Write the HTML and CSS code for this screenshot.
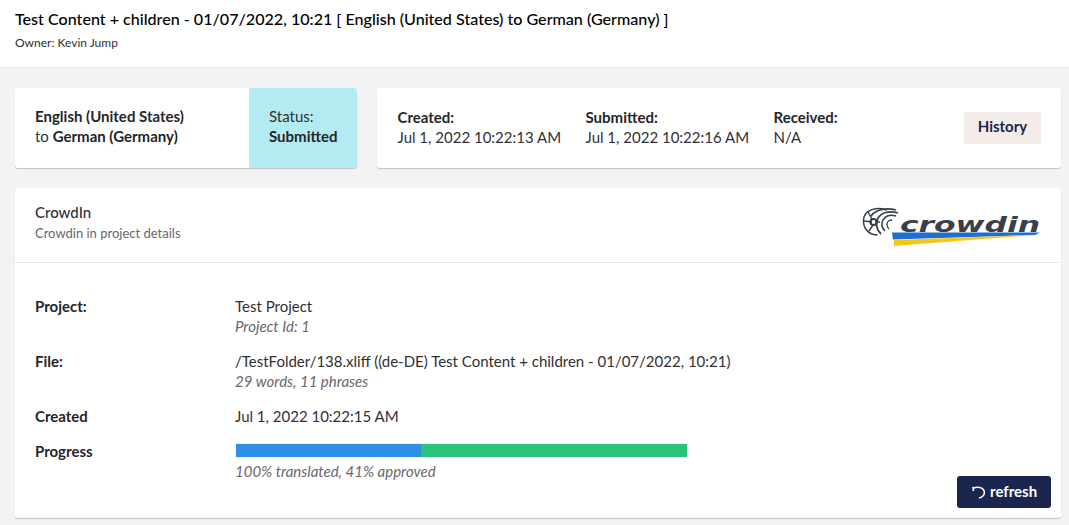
FILE: index.html
```html
<!DOCTYPE html>
<html>
<head>
	<title>Translation job</title>
	<link rel="stylesheet" href="styles.css">
</head>
<body>
	<div class="page-header">
		<div class="page-title">Test Content + children - 01/07/2022, 10:21 [ English (United States) to German (Germany) ]</div>
		<div class="page-owner">Owner: Kevin Jump</div>
	</div>
	<div class="page-body">
		<div class="summary">
			<div class="card lang-card">
				<div class="lang-text">
					<div><b>English (United States)</b></div>
					<div>to <b>German (Germany)</b></div>
				</div>
				<div class="status-box">
					<div>Status:</div>
					<div><b>Submitted</b></div>
				</div>
			</div>
			<div class="card dates-card">
				<div class="date-col">
					<div><b>Created:</b></div>
					<div>Jul 1, 2022 10:22:13 AM</div>
				</div>
				<div class="date-col">
					<div><b>Submitted:</b></div>
					<div>Jul 1, 2022 10:22:16 AM</div>
				</div>
				<div class="date-col">
					<div><b>Received:</b></div>
					<div>N/A</div>
				</div>
				<button class="history-btn">History</button>
			</div>
		</div>
		<div class="card details">
			<div class="details-head">
				<div>
					<div class="provider-name">CrowdIn</div>
					<div class="provider-desc">Crowdin in project details</div>
				</div>
				<svg class="logo" width="180" height="42" viewBox="0 0 180 42">
					<g fill="none" stroke="#3a3f4a">
						<path d="M25 6C12 2 2 7 1.500 16c-.5 9 6 15 14 15" stroke-width="1.500"/>
						<path d="M34 6C24 3 13 6 9 12" stroke-width="1.800"/>
						<path d="M36 9C27 6 19 9 16 14c-3 6 -1 12 3 16" stroke-width="1.800"/>
						<path d="M34 12C28 10 23 12 21 16c-2 4 -1 8 2 11" stroke-width="1.600"/>
						<path d="M30 16c-3 0 -5 2 -5 4s1 4 2 5" stroke-width="1.300"/>
						<path d="M2 17l8 1M6 8l4 7M7 27l4-6M14 18h4" stroke-width="1.500"/>
						<circle cx="11.500" cy="18" r="3" stroke-width="2.200"/>
					</g>
					<text class="logo-word" x="38" y="27.500" textLength="140" lengthAdjust="spacingAndGlyphs">crowdin</text>
					<polygon points="30,28.500 178,28.500 173,31 31,35.500" fill="#1f6fd0"/>
					<polygon points="32,36 172,31 32,42" fill="#f5c518"/>
				</svg>
			</div>
			<div class="details-body">
				<div class="row">
					<div class="row-label"><b>Project:</b></div>
					<div>
						<div>Test Project</div>
						<div class="sub">Project Id: 1</div>
					</div>
				</div>
				<div class="row">
					<div class="row-label"><b>File:</b></div>
					<div>
						<div>/TestFolder/138.xliff ((de-DE) Test Content + children - 01/07/2022, 10:21)</div>
						<div class="sub">29 words, 11 phrases</div>
					</div>
				</div>
				<div class="row">
					<div class="row-label"><b>Created</b></div>
					<div>Jul 1, 2022 10:22:15 AM</div>
				</div>
				<div class="row">
					<div class="row-label"><b>Progress</b></div>
					<div>
						<div class="progress">
							<div class="bar-blue"></div>
							<div class="bar-green"></div>
						</div>
						<div class="sub">100% translated, 41% approved</div>
					</div>
				</div>
			</div>
			<button class="refresh-btn">
				<svg width="16" height="16" viewBox="0 0 16 16" fill="none" stroke="#fff" stroke-width="1.600">
					<path d="M2.200 5.500C5 3.800 13 3 13.400 9.500 13.500 12 11 14.500 8 15"/>
					<path d="M1.900 3.800l.5 4.200"/>
				</svg>
				refresh
			</button>
		</div>
	</div>
</body>
</html>
```

FILE: styles.css
```css
* {
	box-sizing: border-box;
}
body {
	margin: 0;
	height: 525px;
	overflow: hidden;
	background: #f4f2f2;
	font-family: Lato, sans-serif;
	font-size: 15px;
	line-height: 20px;
	color: #303033;
}
b {
	font-weight: 700;
	color: #25252b;
}
.page-header {
	height: 68px;
	padding: 9px 15px 0;
	background: #fff;
	border-bottom: 1px solid #e9e9eb;
}
.page-title {
	font-size: 16.100px;
	font-weight: 500;
	line-height: 20px;
	color: #000;
}
.page-owner {
	margin-top: 4px;
	font-size: 12px;
	line-height: 20px;
}
.page-body {
	padding: 20px 8px 0 15px;
}
.card {
	background: #fff;
	border-radius: 3px;
	box-shadow: 0 1px 1px rgba(0, 0, 0, 0.2);
}
.summary {
	display: flex;
	gap: 20px;
	height: 80px;
	margin-bottom: 20px;
}
.lang-card {
	display: flex;
	width: 342px;
	overflow: hidden;
}
.lang-text {
	flex: 1;
	padding: 18px 20px;
}
.status-box {
	width: 108px;
	padding: 18px 20px;
	background: #b2ebf2;
}
.dates-card {
	flex: 1;
	display: flex;
	align-items: center;
	padding: 0 20px 2px 20.500px;
}
.date-col {
	width: 188px;
}
.history-btn {
	margin-left: auto;
	width: 77px;
	height: 32px;
	margin-top: 2px;
	padding: 0 0 5px;
	border: 0;
	border-radius: 3px;
	background: #f3ece8;
	font: 700 15px Lato, sans-serif;
	color: #1b264f;
}
.details {
	position: relative;
	height: 330px;
}
.details-head {
	display: flex;
	justify-content: space-between;
	align-items: center;
	height: 75px;
	padding: 0 20px;
	border-bottom: 1px solid #e9e9eb;
}
.provider-name {
	margin-top: -6px;
	font-weight: 500;
	line-height: 20px;
}
.provider-desc {
	margin-top: 1px;
	font-size: 13px;
	line-height: 20px;
	color: #68676b;
}
.logo {
	margin-right: -1px;
}
.logo-word {
	font-family: "DejaVu Sans", sans-serif;
	font-size: 22px;
	font-weight: 700;
	font-style: italic;
	fill: #3a3f4a;
}
.details-body {
	padding: 33px 20px 0;
}
.row {
	display: flex;
	margin-bottom: 15px;
}
.row-label {
	width: 200px;
	flex-shrink: 0;
}
.sub {
	font-size: 15px;
	font-style: italic;
	color: #68676b;
}
.progress {
	display: flex;
	width: 453px;
	height: 15px;
	margin: 2px 0 3px;
	border: 1px solid #f3f3f5;
}
.bar-blue {
	width: 41%;
	background: #2f8ee8;
}
.bar-green {
	flex: 1;
	background: #2bc37c;
}
.refresh-btn {
	position: absolute;
	right: 10px;
	bottom: 10px;
	display: flex;
	align-items: center;
	gap: 3px;
	width: 94px;
	height: 32px;
	padding: 0 0 2px 14px;
	border: 0;
	border-radius: 3px;
	background: #1b264f;
	color: #fff;
	font: 700 15px Lato, sans-serif;
}
```
